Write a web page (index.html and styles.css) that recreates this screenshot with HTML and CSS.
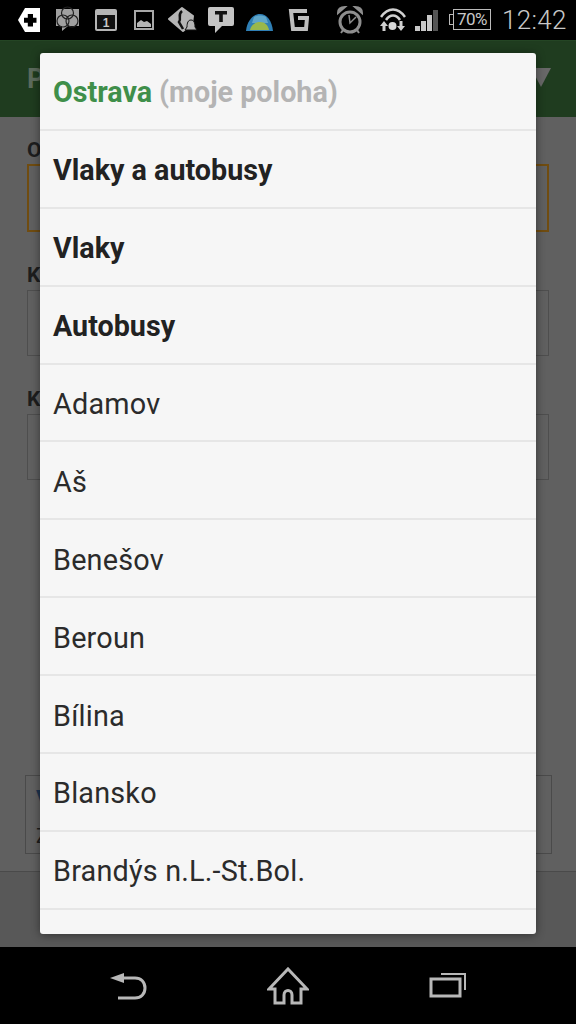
FILE: index.html
```html
<!DOCTYPE html>
<html lang="en">
<head>
    <meta charset="UTF-8">
    <meta name="viewport" content="width=device-width, initial-scale=1.0">
    <title>Vyber město</title>
    <link rel="stylesheet" href="styles.css">
</head>
<body>
    <div class="screen">
        <div class="status-bar">
            <svg width="24" height="40" viewBox="0 0 24 40"><path d="M7 8H22V32H7L0 20Z" fill="#fff"/><path d="M9.800 17.700H6V22.800H9.800V26.500H15V22.800H18.500V17.700H15V14H9.800Z" fill="#000"/></svg>
            <svg width="26" height="40" viewBox="0 0 26 40"><path d="M1 9H24V26H13L7 31V26H1Z" fill="#a0a0a0"/><g fill="none" stroke="#222" stroke-width="1.200"><circle cx="12.500" cy="13" r="6"/><circle cx="8" cy="21" r="6"/><circle cx="17" cy="21" r="6"/></g></svg>
            <svg width="25" height="40" viewBox="0 0 25 40"><rect x="1" y="9" width="22" height="22" rx="2" fill="#b5b5b5"/><rect x="3" y="15" width="18" height="14" fill="#111"/><text x="12" y="27" class="cal-num">1</text></svg>
            <svg width="21" height="40" viewBox="0 0 21 40"><rect x="1" y="11" width="18" height="18" fill="none" stroke="#a8a8a8" stroke-width="2"/><path d="M3 27V23L7 20L10 22L13 21L17 24V27Z" fill="#b5b5b5"/></svg>
            <svg width="30" height="40" viewBox="0 0 30 40"><path d="M14 8L25 16L24 24L15 31L1 19Z" fill="#b5b5b5" stroke="#b5b5b5" stroke-width="2" stroke-linejoin="round"/><path d="M14 11C9 15 14 18 11 22L15 29" fill="none" stroke="#111" stroke-width="2.500"/><path d="M23 20C26 20 27 23 27 27L29 30H17L19 27C19 23 20 20 23 20Z" fill="#b5b5b5" stroke="#111"/></svg>
            <svg width="28" height="40" viewBox="0 0 28 40"><path d="M3 7H25Q27 7 27 9V24Q27 26 25 26H15L8 33V26H3Q1 26 1 24V9Q1 7 3 7Z" fill="#c4c4c4"/><path d="M8 11H20V14.500H15.800V22H12.200V14.500H8Z" fill="#111"/></svg>
            <svg width="28" height="40" viewBox="0 0 28 40"><path d="M0 31C1 21 7 14 14 14C21 14 26 21 27 31Z" fill="#2f7fb5"/><path d="M8 17C11 15 17 15 20 17L22 23H6Z" fill="#5fa6c9"/><path d="M4 30C5 25 9 22 14 22C19 22 22 25 23 30Z" fill="#9ab84a"/></svg>
            <svg width="21" height="40" viewBox="0 0 21 40"><path d="M19 11H3L5 29H18L19 18H10" fill="none" stroke="#bdbdbd" stroke-width="4"/></svg>
            <svg width="27" height="40" viewBox="0 0 27 40"><circle cx="13" cy="22" r="10" fill="none" stroke="#8e8e8e" stroke-width="3"/><path d="M1 13C1 9 4 7 8 7ZM25 13C25 9 22 7 18 7Z" fill="#8e8e8e" stroke="#8e8e8e" stroke-width="2"/><path d="M12 15L13 23L19 17" fill="none" stroke="#8e8e8e" stroke-width="1.500"/><path d="M6 30L4 33M20 30L22 33" stroke="#8e8e8e" stroke-width="2"/></svg>
            <svg width="26" height="40" viewBox="0 0 26 40"><g fill="none" stroke="#d0d0d0" stroke-width="2.500"><path d="M1 17C8 7 18 7 25 17"/><path d="M6 20C10 14 16 14 20 20"/></g><circle cx="12.500" cy="26" r="4" fill="#d8d8d8"/><path d="M4 21L8 26H5.500V31H2.500V26H0ZM21 31L17 26H19.500V21H22.500V26H25Z" fill="#d0d0d0"/></svg>
            <svg width="26" height="40" viewBox="0 0 26 40"><rect x="1" y="26" width="5" height="5" fill="#c8c8c8"/><rect x="7" y="21" width="5" height="10" fill="#c8c8c8"/><rect x="13" y="15" width="5" height="16" fill="#c8c8c8"/><rect x="19" y="10" width="5" height="21" fill="#555"/></svg>
            <div class="battery"><span class="battery-cap"></span><span class="battery-level">70%</span></div>
            <span class="clock">12:42</span>
        </div>

        <div class="app-bar">
            <span class="app-title">P</span>
            <span class="app-arrow"></span>
        </div>

        <div class="content">
            <div class="form-group form-group-first">
                <label>O</label>
                <div class="field field-active"></div>
            </div>
            <div class="form-group">
                <label>K</label>
                <div class="field"></div>
            </div>
            <div class="form-group">
                <label>K</label>
                <div class="field"></div>
            </div>
            <div class="notice">
                <span class="notice-title">V</span>
                <span class="notice-text">Z</span>
            </div>
        </div>

        <div class="footer"></div>

        <div class="nav-bar">
            <svg width="40" height="40" viewBox="0 0 40 40" class="nav-back"><path d="M1 8L15 3V13Z" fill="#b8b8b8"/><path d="M14 8H26C32 8 36 12 36 18C36 24 32 28 26 28H9" fill="none" stroke="#b8b8b8" stroke-width="3"/></svg>
            <svg width="42" height="38" viewBox="0 0 42 38" class="nav-home"><path d="M21 2L40 22H34V36H25V28C25 22 17 22 17 28V36H8V22H2Z" fill="none" stroke="#b8b8b8" stroke-width="3"/></svg>
            <svg width="38" height="28" viewBox="0 0 38 28" class="nav-recent"><rect x="2" y="8" width="29" height="17" fill="none" stroke="#b8b8b8" stroke-width="3"/><path d="M12 3H36V19" fill="none" stroke="#b8b8b8" stroke-width="2"/></svg>
        </div>

        <div class="dialog">
            <div class="dialog-row row-title"><span class="city">Ostrava</span> <span class="hint">(moje poloha)</span></div>
            <div class="dialog-row row-bold">Vlaky a autobusy</div>
            <div class="dialog-row row-bold">Vlaky</div>
            <div class="dialog-row row-bold">Autobusy</div>
            <div class="dialog-row">Adamov</div>
            <div class="dialog-row">Aš</div>
            <div class="dialog-row">Benešov</div>
            <div class="dialog-row">Beroun</div>
            <div class="dialog-row">Bílina</div>
            <div class="dialog-row">Blansko</div>
            <div class="dialog-row">Brandýs n.L.-St.Bol.</div>
        </div>
    </div>
</body>
</html>
```

FILE: styles.css
```css
* {
    box-sizing: border-box;
}
body {
    margin: 0;
    font-family: Roboto, "Liberation Sans", sans-serif;
    background-color: #000;
}
.screen {
    position: relative;
    display: flex;
    flex-direction: column;
    width: 576px;
    height: 1024px;
    overflow: hidden;
    background-color: #606060;
}

/* status bar */
.status-bar {
    display: grid;
    grid-template-columns: 37px 39px 40px 34px 39px 39px 42px 49px 43px 34px 35px 55px 1fr;
    align-items: center;
    height: 40px;
    padding-left: 18px;
    background-color: #000;
}
.status-bar svg {
    display: block;
}
.cal-num {
    font-family: "Liberation Sans", sans-serif;
    font-size: 12px;
    font-weight: bold;
    fill: #c8c8c8;
    text-anchor: middle;
}
.battery {
    position: relative;
    width: 38px;
    height: 21px;
    margin: -1px 0 0 4px;
    border: 1px solid #bbb;
    text-align: center;
}
.battery-cap {
    position: absolute;
    left: -5px;
    top: 4px;
    width: 4px;
    height: 11px;
    border: 1px solid #bbb;
    border-right: none;
}
.battery-level {
    display: block;
    color: #c8c8c8;
    font-size: 17px;
    letter-spacing: -0.6px;
    line-height: 19px;
}
.clock {
    margin-left: -2px;
    color: #c8c8c8;
    font-size: 26px;
    font-weight: 300;
    letter-spacing: 0.3px;
}

/* dimmed page behind the dialog */
.app-bar {
    display: flex;
    justify-content: space-between;
    align-items: center;
    height: 77px;
    padding: 0 25px 0 27px;
    background-color: #1f3c1f;
    border-top: 1px solid #244524;
}
.app-title {
    color: #5c6a5c;
    font-size: 27px;
    font-weight: bold;
}
.app-arrow {
    width: 0;
    height: 0;
    margin-top: -4px;
    border-left: 10px solid transparent;
    border-right: 10px solid transparent;
    border-top: 19px solid #686868;
}
.content {
    flex: 1;
    padding: 19px 27px 0;
}
.form-group {
    height: 124px;
}
.form-group-first {
    height: 126px;
}
.form-group label {
    display: block;
    height: 28px;
    color: #1d1d1d;
    font-size: 21px;
    font-weight: bold;
    line-height: 26px;
}
.form-group-first label {
    line-height: 28px;
}
.field {
    width: 522px;
    height: 66px;
    border: 1px solid #4e4e4e;
}
.field-active {
    height: 68px;
    border: 2px solid #704c10;
}
.notice {
    display: flex;
    flex-direction: column;
    gap: 12px;
    width: 527px;
    height: 79px;
    margin: 265px 0 0 -2px;
    padding: 9px 10px;
    border: 1px solid #4a4a4a;
}
.notice-title {
    color: #1e3550;
    font-size: 24px;
    font-weight: bold;
    line-height: 28px;
}
.notice-text {
    color: #1d1d1d;
    font-size: 20px;
    line-height: 22px;
}
.footer {
    height: 76px;
    background-color: #585858;
    border-top: 1px solid #4a4a4a;
}

/* nav */
.nav-bar {
    position: relative;
    height: 77px;
    background-color: #000;
}
.nav-bar svg {
    position: absolute;
}
.nav-back {
    left: 109px;
    top: 23px;
}
.nav-home {
    left: 267px;
    top: 20px;
}
.nav-recent {
    left: 429px;
    top: 24px;
}

/* dialog */
.dialog {
    position: absolute;
    left: 40px;
    top: 53px;
    width: 496px;
    height: 881px;
    overflow: hidden;
    background-color: #f6f6f6;
    border-radius: 3px;
    box-shadow: 0 1px 10px rgba(0, 0, 0, 0.45);
}
.dialog-row {
    display: flex;
    align-items: center;
    gap: 7px;
    height: 77.9px;
    padding: 3px 13px 0;
    border-bottom: 2px solid #e6e6e6;
    color: #2b2b2b;
    font-size: 28.8px;
    letter-spacing: 0.2px;
}
.row-title {
    font-size: 28.7px;
    font-weight: bold;
    letter-spacing: 0;
}
.row-bold {
    color: #222;
    font-size: 28.7px;
    font-weight: bold;
    letter-spacing: 0;
}
.city {
    color: #3f8f4a;
}
.hint {
    color: #b4b4b4;
}
```
